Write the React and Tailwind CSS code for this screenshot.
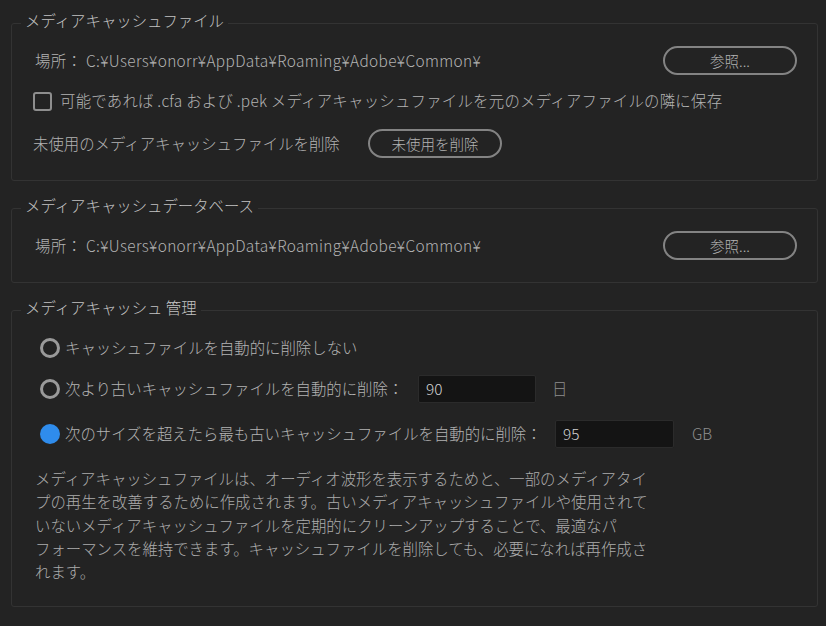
import React from "react";

const FONT = { fontFamily: '"Noto Sans CJK JP", "Noto Sans", sans-serif' };

function Group({ title, children, className = "" }) {
  return (
    <fieldset className={`ml-[11px] w-[807px] border border-[#333333] rounded-[3px] ${className}`}>
      <legend className="ml-[9px] px-[4px] h-[24px] leading-[18px] pb-[6px] text-[15.4px] text-[#c2c2c2]">
        {title}
      </legend>
      {children}
    </fieldset>
  );
}

function PillButton({ children, className = "" }) {
  return (
    <button className={`h-[29px] w-[134px] rounded-full border-2 border-[#838383] text-[14.5px] text-[#b3b3b3] flex items-center justify-center ${className}`}>
      {children}
    </button>
  );
}

function Radio({ checked }) {
  return checked ? (
    <span className="w-[20px] h-[20px] rounded-full bg-[#2f8cec] shrink-0" />
  ) : (
    <span className="w-[20px] h-[20px] rounded-full border-[3px] border-[#9a9a9a] shrink-0" />
  );
}

export default function App() {
  return (
    <div className="w-[826px] h-[626px] bg-[#232323] overflow-hidden text-[#b3b3b3] text-[15.4px] font-light" style={FONT}>
      <div className="h-[11px]" />
      <Group title="メディアキャッシュファイル">
        <div className="pt-[11px] pb-[22px] pl-[23px] pr-[20px] flex flex-col">
          <div className="h-[29px] flex items-center justify-between">
            <span className="tracking-[0.35px]">場所： C:¥Users¥onorr¥AppData¥Roaming¥Adobe¥Common¥</span>
            <PillButton>参照...</PillButton>
          </div>
          <div className="h-[24px] mt-[14px] flex items-center -ml-[2px]">
            <span className="w-[19px] h-[19px] border-2 border-[#8e8e8e] rounded-[3px] shrink-0" />
            <span className="ml-[8px] tracking-[0.25px]">可能であれば .cfa および .pek メディアキャッシュファイルを元のメディアファイルの隣に保存</span>
          </div>
          <div className="h-[29px] mt-[16px] flex items-center -ml-[2px]">
            <span className="w-[335px]">未使用のメディアキャッシュファイルを削除</span>
            <PillButton>未使用を削除</PillButton>
          </div>
        </div>
      </Group>
      <Group title="メディアキャッシュデータベース" className="mt-[15px]">
        <div className="pt-[11px] pb-[22px] pl-[23px] pr-[20px]">
          <div className="h-[29px] flex items-center justify-between">
            <span className="tracking-[0.35px]">場所： C:¥Users¥onorr¥AppData¥Roaming¥Adobe¥Common¥</span>
            <PillButton>参照...</PillButton>
          </div>
        </div>
      </Group>
      <Group title="メディアキャッシュ 管理" className="mt-[15px]">
        <div className="pt-[14px] pb-[23px] pl-[28px] pr-[20px] flex flex-col">
          <div className="h-[24px] flex items-center">
            <Radio />
            <span className="ml-[5px]">キャッシュファイルを自動的に削除しない</span>
          </div>
          <div className="h-[28px] mt-[15px] flex items-center">
            <Radio />
            <span className="ml-[5px] w-[353px]">次より古いキャッシュファイルを自動的に削除：</span>
            <div className="w-[118px] h-[28px] bg-[#141414] border border-[#2b2b2b] rounded-[2px] flex items-center pl-[7px] text-[#d2d2d2]">90</div>
            <span className="ml-[16px] text-[#8e8e8e]">日</span>
          </div>
          <div className="h-[28px] mt-[17px] flex items-center">
            <Radio checked />
            <span className="ml-[5px] w-[490px]">次のサイズを超えたら最も古いキャッシュファイルを自動的に削除：</span>
            <div className="w-[119px] h-[28px] bg-[#141414] border border-[#2b2b2b] rounded-[2px] flex items-center pl-[7px] text-[#d2d2d2]">95</div>
            <span className="ml-[18px] text-[#8e8e8e]">GB</span>
          </div>
          <div className="mt-[19px] -ml-[5px] leading-[23.3px] text-[#acacac] whitespace-nowrap">
            <div>メディアキャッシュファイルは、オーディオ波形を表示するためと、一部のメディアタイ</div>
            <div>プの再生を改善するために作成されます。古いメディアキャッシュファイルや使用されて</div>
            <div>いないメディアキャッシュファイルを定期的にクリーンアップすることで、最適なパ</div>
            <div>フォーマンスを維持できます。キャッシュファイルを削除しても、必要になれば再作成さ</div>
            <div>れます。</div>
          </div>
        </div>
      </Group>
    </div>
  );
}
